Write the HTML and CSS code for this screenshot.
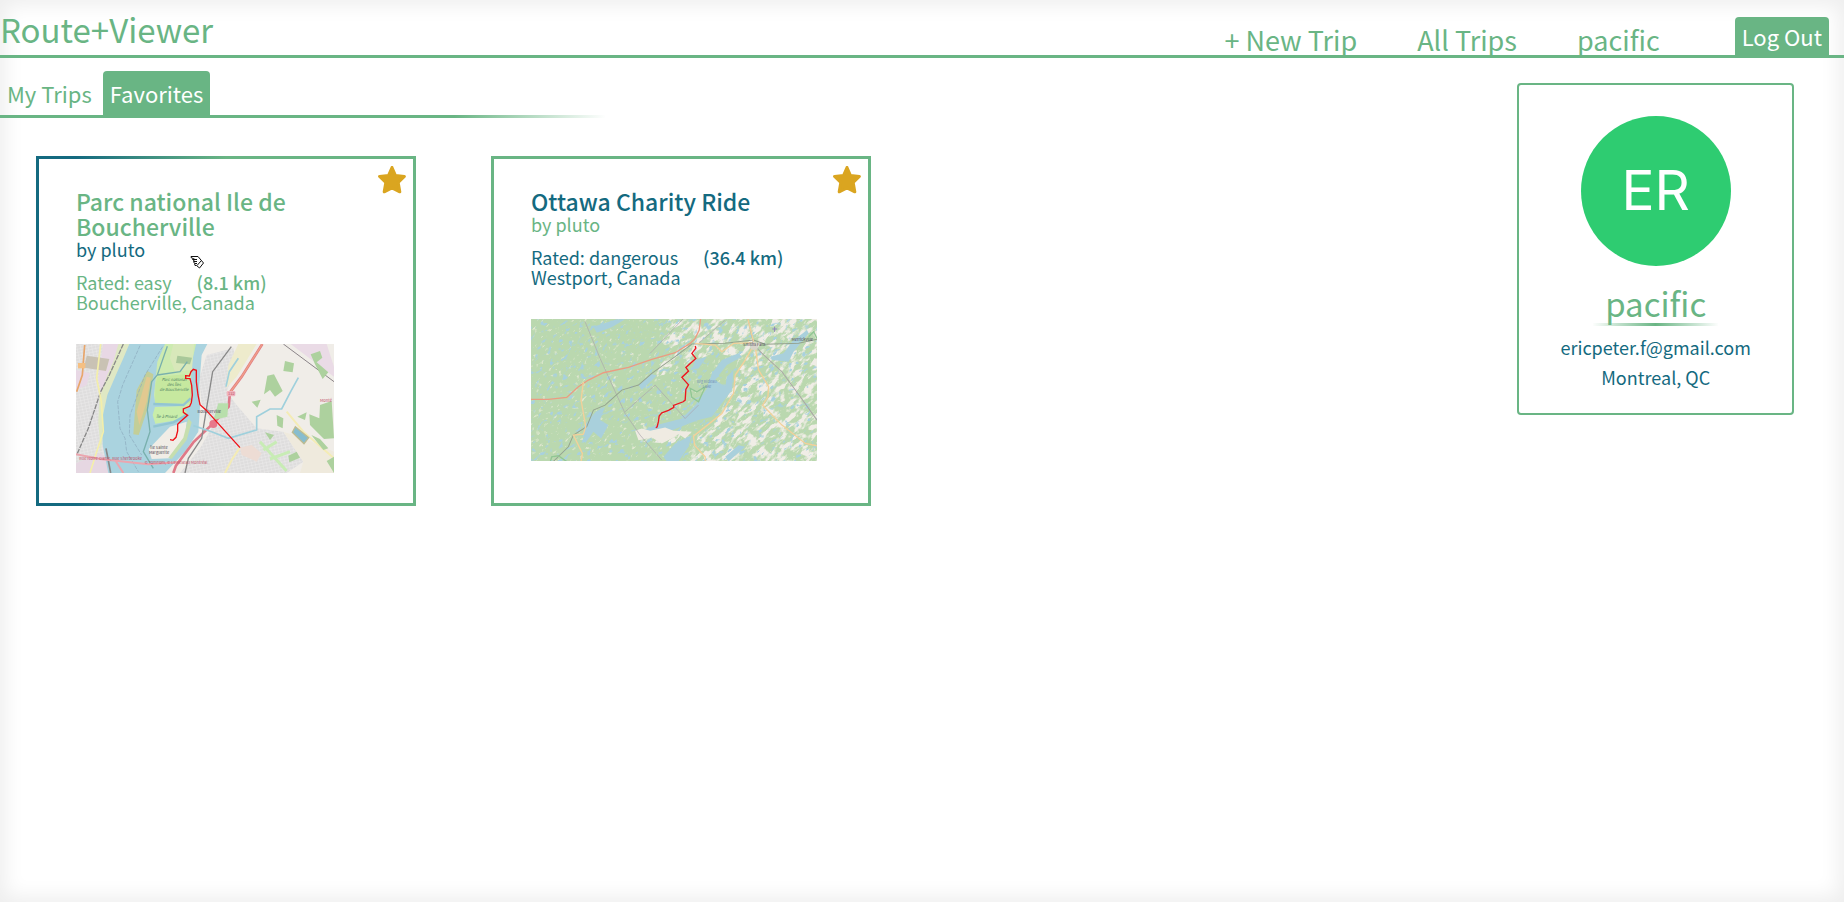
FILE: index.html
```
<!DOCTYPE html>
<html lang="en">
<head>
<meta charset="utf-8">
<title>Route+Viewer</title>
<link rel="stylesheet" href="styles.css">
</head>
<body>
<div class="page">
  <header class="header">
    <a class="logo" href="#">Route+Viewer</a>
    <nav class="nav">
      <a href="#">+ New Trip</a>
      <a href="#">All Trips</a>
      <a href="#">pacific</a>
      <button class="logout" type="button">Log Out</button>
    </nav>
  </header>
  <div class="content">
    <main class="trips">
      <nav class="tabs">
        <button class="tab" type="button">My Trips</button>
        <button class="tab tab-active" type="button">Favorites</button>
      </nav>
      <div class="cards">
        <article class="card card-hover">
          <svg class="star" viewBox="0 0 28 28" aria-hidden="true"><path d="M14 1.5 L17.4 9.4 L26.4 10.4 L20.2 16.4 L21.8 25.8 L14 22 L6.2 25.8 L7.8 16.4 L1.6 10.4 L10.6 9.4 Z"/></svg>
          <h2>Parc national Ile de Boucherville</h2>
          <p class="author">by pluto</p>
          <p class="facts"><span>Rated: easy</span><b>(8.1 km)</b></p>
          <p class="place">Boucherville, Canada</p>
          <svg class="map map-small" viewBox="18 27 774 387" role="img" aria-label="Map of Boucherville">
            <defs>
              <pattern id="streets" width="11" height="9" patternUnits="userSpaceOnUse" patternTransform="rotate(-12)">
                <rect width="11" height="9" fill="#dedddd"/><path d="M0 0H11M0 0V9" stroke="#f0efef" stroke-width="2.4"/>
              </pattern>
            </defs>
            <rect x="18" y="27" width="774" height="387" fill="#f0ede8"/>
            <path d="M18 27H175L130 120L110 240L125 414H18Z" fill="url(#streets)"/>
            <path d="M100 27H172L140 110L112 170L98 190L85 130Z" fill="#e8d8e5"/>
            <path d="M18 105L60 115L50 150L18 165Z" fill="#e8d8e5"/>
            <path d="M50 62L118 72L108 108L42 98Z" fill="#c9c2b4"/>
            <path d="M18 385L90 355L140 380L150 414H18Z" fill="#e6d7e2"/>
            <path d="M145 27H185L155 100L120 200L100 300L92 350L85 260L88 190L112 120L130 80Z" fill="#dfe8c4"/>
            <path d="M410 60L490 40L500 90L470 170L500 210L560 280L640 290L700 380L650 414H330L390 340L430 270L395 210L388 130Z" fill="url(#streets)"/>
            <path d="M640 290L700 380L690 414H792V350L700 310Z" fill="#efeadd"/>
            <path d="M505 27H560L500 125L468 160L475 90Z" fill="#eeebcc"/>
            <path d="M178 27H412L395 60L388 150L390 215L385 290L345 350L285 414H115L98 330L97 250L112 180L140 115L160 70Z" fill="#aad3df"/>
            <path d="M285 27H378L366 80L362 150L362 205L350 222L335 218L300 208H256L252 180L257 130L262 80Z" fill="#cdebb0"/>
            <path d="M310 27H372L366 105L315 110L300 70Z" fill="#d8e8ba"/>
            <path d="M322 62L366 68L360 88L318 84Z" fill="#a9c89a"/>
            <path d="M262 125L345 118L365 150L362 205L255 206L256 150Z" fill="#c6e89f"/>
            <path d="M255 216L330 214L352 232L320 256L256 266L248 240Z" fill="#c9edaa"/>
            <path d="M236 342L300 275L350 260L345 310L300 370L245 372Z" fill="#f0ede6"/>
            <path d="M355 250L365 262L350 315L305 372L295 368L340 308Z" fill="#c6deae"/>
            <path d="M232 108L250 118L240 200L206 300L190 298L194 240L200 165Z" fill="#c3ce98"/>
            <path d="M230 125L242 128L230 200L208 270L200 230Z" fill="#e2c990"/>
            <path d="M292 34L262 120L245 140L232 225L240 290L220 350L250 400M262 120L330 110L352 80" fill="none" stroke="#79b0ad" stroke-width="4"/>
            <path d="M250 207L340 210L362 190M250 275L310 262L350 240" fill="none" stroke="#92c5d2" stroke-width="7"/>
            <path d="M210 32L158 150L143 200L150 280L165 310L170 350L205 410M278 35L225 120L180 240L178 300L215 360" fill="none" stroke="#8ba9bd" stroke-width="2" stroke-dasharray="12 4"/>
            <path d="M160 27L118 120L92 170L55 280L20 360" fill="none" stroke="#888" stroke-width="4" stroke-dasharray="15 3"/>
            <path d="M108 340L122 414" stroke="#888" stroke-width="5"/>
            <path d="M92 27L80 130L94 200L100 290L80 350L60 414" fill="none" stroke="#f4efaa" stroke-width="5"/>
            <path d="M44 30L37 120L20 170" fill="none" stroke="#e8a66b" stroke-width="5"/>
            <path d="M18 358L90 372L235 388L320 382M135 375L160 414" fill="none" stroke="#eba6af" stroke-width="6"/>
            <path d="M577 27L515 125L480 172L476 215L435 260L370 322L318 392L310 414" fill="none" stroke="#df7988" stroke-width="8"/>
            <path d="M577 27L515 125L482 170" fill="none" stroke="#f0a184" stroke-width="4"/>
            <path d="M484 35L428 110L408 230L395 310L355 370L345 414" fill="none" stroke="#888" stroke-width="4"/>
            <path d="M640 27L792 140M675 27L792 108" fill="none" stroke="#8b8488" stroke-width="3"/>
            <path d="M662 27H770L792 95V125Z" fill="#eadbe6"/>
            <path d="M370 272L425 290L475 310L560 285L560 245L600 222L635 222L662 170L685 128M468 155L478 110L505 70" fill="none" stroke="#9fd0dc" stroke-width="5"/>
            <path d="M510 337L485 375L465 414M650 230L700 290L792 370" fill="none" stroke="#f4ecb5" stroke-width="6"/>
            <path d="M510 338L545 330L575 355L560 380L515 360Z" fill="#eddcd4"/>
            <path d="M445 205L475 205L472 245L430 255Z" fill="#b8dfac"/>
            <g fill="#add19e">
              <path d="M645 78L672 85L668 112L640 108Z"/><path d="M592 122L612 118L638 168L615 185L600 165L582 178Z"/><path d="M722 58L750 48L757 68L740 82L775 112L758 132L735 88Z"/>
              <path d="M620 240L640 250L638 280L622 272ZM682 245L710 232L705 255ZM545 200L572 194L562 218ZM655 362L680 350L690 368L658 382ZM585 292L612 300L600 315Z"/>
              <path d="M750 210L785 198L792 310L762 312L720 270L718 238L748 250ZM724 300L750 312L775 340L760 345ZM770 378L792 365V414Z"/>
            </g>
            <path d="M676 275L716 308L702 326L667 292Z" fill="#87bdce" stroke="#bdbb91" stroke-width="4"/>
            <path d="M580 345L620 320M600 372L660 350M570 320L650 408" stroke="#c8ecb5" stroke-width="9"/>
            <rect x="470" y="168" width="26" height="16" rx="4" fill="#f0b4be"/><rect x="24" y="84" width="22" height="16" fill="#f5c083"/>
            <circle cx="430" cy="267" r="12" fill="#e7788a"/>
            <g class="map-label green"><text x="312" y="139">Parc national</text><text x="312" y="153">des Îles</text><text x="312" y="167">de Boucherville</text><text x="290" y="249">Île à Pinard</text></g>
            <g class="map-label dark"><text x="418" y="233">Boucherville</text><text x="267" y="343">Île Sainte</text><text x="267" y="357">Marguerite</text></g>
            <g class="map-label red"><text x="122" y="375">Rue Notre-Dame, Rue Sherbrooke</text><text x="318" y="387">© TomTom, © Le Réseau Montréal</text><text x="484" y="181">132</text><text x="768" y="202">Monté</text></g>
            <path d="M300 314L309 316L318 307L323 288L323 268L333 258L353 241L340 232V222L359 214L364 203L367 180L365 151L360 131L347 130V122L358 123L363 110L370 103L379 106V140L384 180L390 209L407 224L510 338" fill="none" stroke="#f00f16" stroke-width="4"/>
          </svg>
          <svg class="cursor" viewBox="0 0 15 14" aria-hidden="true"><path d="M1 1.5H8L13.5 8L9.5 13L6.5 10.5H5L4.5 8.5L3.5 6.5H5L2.5 4.5H5L1 2.5Z"/><path d="M5 4.5H7M4.5 6.5H7M5 8.5H7M7 10.5L11 6"/></svg>
        </article>
        <article class="card">
          <svg class="star" viewBox="0 0 28 28" aria-hidden="true"><path d="M14 1.5 L17.4 9.4 L26.4 10.4 L20.2 16.4 L21.8 25.8 L14 22 L6.2 25.8 L7.8 16.4 L1.6 10.4 L10.6 9.4 Z"/></svg>
          <h2>Ottawa Charity Ride</h2>
          <p class="author">by pluto</p>
          <p class="facts"><span>Rated: dangerous</span><b>(36.4 km)</b></p>
          <p class="place">Westport, Canada</p>
          <svg class="map map-large" viewBox="18 27 857 427" role="img" aria-label="Map of Westport">
            <defs>
              <filter id="fields" x="0" y="0" width="1" height="1" color-interpolation-filters="sRGB"><feTurbulence type="fractalNoise" baseFrequency="0.03 0.07" numOctaves="4" seed="4"/><feColorMatrix values="0 0 0 0 .94  0 0 0 0 .93  0 0 0 0 .9  7 0 0 0 -3.3"/></filter>
              <filter id="clearings" x="0" y="0" width="1" height="1" color-interpolation-filters="sRGB"><feTurbulence type="fractalNoise" baseFrequency="0.06 0.12" numOctaves="3" seed="9"/><feColorMatrix values="0 0 0 0 .88  0 0 0 0 .91  0 0 0 0 .82  6 0 0 0 -3.7"/></filter>
              <filter id="ponds" x="0" y="0" width="1" height="1" color-interpolation-filters="sRGB"><feTurbulence type="fractalNoise" baseFrequency="0.05 0.09" numOctaves="4" seed="21"/><feColorMatrix values="0 0 0 0 .66  0 0 0 0 .82  0 0 0 0 .87  0 8 0 0 -4.8"/></filter>
              <clipPath id="frame"><rect x="18" y="27" width="857" height="427"/></clipPath>
              <clipPath id="farmland"><path d="M430 27H875V454H480L520 380L570 340L620 230L640 140L560 130L480 170L400 210L390 180L450 120L410 100ZM330 360L400 350L500 380L440 400L345 395Z"/></clipPath>
            </defs>
            <g clip-path="url(#frame)">
              <rect x="18" y="27" width="857" height="427" fill="#bad8af"/>
              <g transform="rotate(-42 446 240)"><rect x="-100" y="-260" width="1100" height="1000" filter="url(#clearings)"/></g>
              <g clip-path="url(#farmland)"><g transform="rotate(-42 446 240)"><rect x="-100" y="-260" width="1100" height="1000" filter="url(#fields)"/></g></g>
              <g transform="rotate(-42 446 240)"><rect x="-100" y="-260" width="1100" height="1000" filter="url(#ponds)"/></g>
              <g fill="#a9d0dc">
                <path d="M205 50L275 28H300L260 52L215 68ZM340 225L378 192L395 196L350 240ZM175 350L212 305L240 290L225 330L250 345L228 385L205 365L180 400Z"/>
                <path d="M395 345L470 325L510 285L545 235L560 190L590 150L640 130L650 140L605 165L570 210L600 230L605 200L625 180L620 240L560 320L520 330L480 345L430 365L360 385L330 370Z"/>
                <path d="M415 440L450 400L500 375L490 410L460 454H425ZM600 440L640 405L660 410L610 454ZM510 150L545 140L520 175L500 178ZM735 140L775 130L800 95L845 60L850 70L805 125L790 155L740 150Z"/>
              </g>
              <path d="M330 362L350 355L375 362L420 352L445 362L500 365L480 385L460 372L440 385L410 400L380 382L340 390Z" fill="#efebe2"/>
              <path d="M180 35L225 145L250 200L300 310L345 375L410 450M300 305L390 225L480 325L520 285M480 20L375 130M600 30L520 100" fill="none" stroke="#aaa5ad" stroke-width="2"/>
              <path d="M18 268L70 268L125 262L160 230L190 210L235 188L310 172L380 148L450 128L495 100L510 85L522 60L526 27" fill="none" stroke="#eb9c82" stroke-width="4"/>
              <path d="M85 454L130 410L145 375L185 350L205 300L240 285L290 240L340 225L380 190L450 140L500 102L600 100L685 90L720 103L820 100L875 88" fill="none" stroke="#95a38f" stroke-width="3"/>
              <path d="M668 27L685 100L705 125L770 185L825 260L875 330" fill="none" stroke="#aaa5a5" stroke-width="3"/>
              <path d="M510 100L570 105L590 125L625 100L690 98L660 150L630 195L625 250L590 310L505 378L508 405L540 440V454M690 110L700 180L730 230L728 260L712 285L770 345L840 400L875 407M175 215L168 270L182 350L175 372L145 375L172 430L168 454M668 27L685 95" fill="none" stroke="#f3d09a" stroke-width="4"/>
              <path d="M495 235L515 245L540 230L520 275L500 262ZM76 454L80 440L100 437L125 454M850 80L865 65L875 85" fill="none" stroke="#91c694" stroke-width="4"/>
              <circle cx="687" cy="108" r="12" fill="#d7d4ca"/>
              <path d="M748 50V65M741 57H756" stroke="#8f84bd" stroke-width="3"/>
              <g class="map-label dark"><text x="687" y="109">Smiths Falls</text><text x="831" y="94">Merrickville</text></g>
              <g class="map-label blue"><text x="545" y="219">Big Rideau</text><text x="545" y="233">Lake</text></g>
              <path d="M510 108L512 114L500 130L512 145L482 172L490 183L470 202L490 224L482 238L480 270L474 275L445 286L446 292L430 301L410 308L402 318L400 334L396 350L392 353" fill="none" stroke="#ed1620" stroke-width="4"/>
            </g>
          </svg>
        </article>
      </div>
    </main>
    <aside class="profile">
      <div class="avatar">ER</div>
      <h1>pacific</h1>
      <p>ericpeter.f@gmail.com</p>
      <p>Montreal, QC</p>
    </aside>
  </div>
</div>
</body>
</html>
```
FILE: styles.css
```
:root {
  --green: #69b584;
  --teal: #146a80;
}

* { box-sizing: border-box; }

body {
  margin: 0;
  font-family: "Noto Sans CJK SC", "Noto Sans", sans-serif;
  font-size: 18px;
  line-height: 20px;
  color: var(--teal);
  background: #fff;
}

h1, h2, p { margin: 0; font-weight: 400; }
a { color: inherit; text-decoration: none; }
button { border: 0; padding: 0; background: none; font: inherit; color: inherit; cursor: pointer; }

.page {
  min-height: 100vh;
  box-shadow: inset 0 0 20px 5px #eee;
}

.header {
  display: flex;
  justify-content: space-between;
  align-items: flex-end;
  height: 58px;
  border-bottom: 3px solid var(--green);
  color: var(--green);
}

.logo {
  align-self: flex-start;
  font-size: 33px;
  line-height: 58px;
}

.nav {
  display: flex;
  align-items: flex-end;
  gap: 60px;
  padding-right: 15px;
  font-size: 27px;
  line-height: 30px;
}

.logout {
  height: 38px;
  margin-left: 15px;
  padding: 0 7px;
  border-radius: 4px 4px 0 0;
  background: var(--green);
  color: #fff;
  font-size: 22px;
  line-height: 34px;
}

.content {
  display: flex;
  justify-content: space-between;
  align-items: flex-start;
}

.trips { width: 67%; }

.tabs {
  display: flex;
  gap: 4px;
  width: 49%;
  margin-top: 13px;
  border-bottom: 3px solid;
  border-image: linear-gradient(to right, var(--green) 75%, transparent) 1;
}

.tab {
  height: 44px;
  padding: 0 7px;
  border-radius: 4px 4px 0 0;
  font-size: 22px;
  line-height: 40px;
  color: var(--green);
}

.tab-active { background: var(--green); color: #fff; }

.cards {
  display: flex;
  align-items: stretch;
  gap: 75px;
  padding: 38px 0 0 36px;
}

.card {
  position: relative;
  width: 380px;
  padding: 30px 80px 30px 37px;
  border: 3px solid var(--green);
}

.card-hover { border-image: linear-gradient(to right, var(--teal) 10%, var(--green) 50%) 1; }

.card h2 {
  font-size: 23px;
  line-height: 25px;
  font-weight: 500;
}

.author { color: var(--green); }
.card-hover { color: var(--green); }
.card-hover .author { color: var(--teal); }

.facts { display: flex; gap: 25px; margin-top: 13px; white-space: nowrap; }
.facts b { font-weight: 500; }

.map { display: block; margin-top: 32px; }
.map-small { width: 258px; }
.map-large { width: 286px; }

.map-label { font-size: 12px; text-anchor: middle; }
.green { fill: #4b8061; font-style: italic; }
.dark { fill: #4d4650; }
.red { fill: #bf5368; }
.blue { fill: #7193b7; }

.star {
  position: absolute;
  top: 7px;
  right: 7px;
  width: 28px;
  fill: #daa520;
  stroke: #daa520;
  stroke-width: 3;
  stroke-linejoin: round;
}

.cursor {
  position: absolute;
  top: 96px;
  left: 151px;
  width: 15px;
  fill: #fff;
  stroke: #111;
  stroke-width: 1;
}

.profile {
  display: flex;
  flex-direction: column;
  align-items: center;
  gap: 10px;
  width: 15%;
  margin: 25px 50px 0 0;
  padding: 31px 20px 26px;
  border: 2px solid var(--green);
  border-radius: 4px;
}

.avatar {
  width: 150px;
  height: 150px;
  border-radius: 50%;
  background: #2ecc71;
  color: #fff;
  font: 400 55px/148px Inter, sans-serif;
  text-align: center;
}

.profile h1 {
  padding: 0 12px;
  margin: 7px 0 1px;
  border-bottom: 3px solid;
  border-image: linear-gradient(to right, transparent, var(--green), transparent) 1;
  color: var(--green);
  font-size: 33px;
  line-height: 40px;
}
```
